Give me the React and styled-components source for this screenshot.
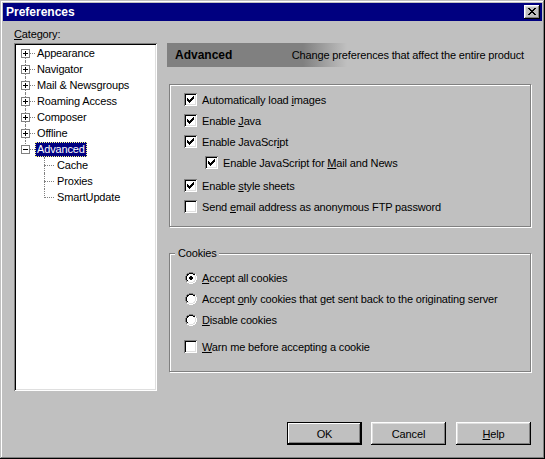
import React from 'react'
import styled, { createGlobalStyle } from 'styled-components'

const GlobalStyle = createGlobalStyle`
  html, body {
    margin: 0;
    padding: 0;
    background: #c0c0c0;
  }
  body {
    font-family: "Liberation Sans", Arial, sans-serif;
    font-size: 11px;
    letter-spacing: -0.15px;
    color: #000;
  }
`

// small pixel drawings (check mark, radio, tree boxes, close glyph)
const PALETTE = {
  K: '#000000',
  G: '#808080',
  W: '#ffffff',
  L: '#dfdfdf',
  w: '#ffffff',
}

const Pixels = ({ rows }) => (
  <svg width={rows[0].length} height={rows.length} shapeRendering="crispEdges" style={{ display: 'block' }}>
    {rows.flatMap((row, y) =>
      [...row].map((ch, x) =>
        PALETTE[ch] ? <rect key={x + '-' + y} x={x} y={y} width="1" height="1" fill={PALETTE[ch]} /> : null
      )
    )}
  </svg>
)

const CHECK = [
  '......K',
  '.....KK',
  'K...KKK',
  'KK.KKK.',
  'KKKKK..',
  '.KKK...',
  '..K....',
]

const CLOSE_X = [
  'KK....KK',
  '.KK..KK.',
  '..KKKK..',
  '...KK...',
  '..KKKK..',
  '.KK..KK.',
  'KK....KK',
]

const RADIO = [
  '....GGGG....',
  '..GGKKKKGG..',
  '.GKKwwwwKKW.',
  '.GKwwwwwwLW.',
  'GKwwwwwwwwLW',
  'GKwwwwwwwwLW',
  'GKwwwwwwwwLW',
  'GKwwwwwwwwLW',
  '.GKwwwwwwLW.',
  '.GLLwwwwLLW.',
  '..WWLLLLWW..',
  '....WWWW....',
]

const RADIO_ON = [
  '....GGGG....',
  '..GGKKKKGG..',
  '.GKKwwwwKKW.',
  '.GKwwwwwwLW.',
  'GKwwwKKwwwLW',
  'GKwwKKKKwwLW',
  'GKwwKKKKwwLW',
  'GKwwwKKwwwLW',
  '.GKwwwwwwLW.',
  '.GLLwwwwLLW.',
  '..WWLLLLWW..',
  '....WWWW....',
]

const PLUS = [
  'GGGGGGGGG',
  'GwwwwwwwG',
  'GwwwKwwwG',
  'GwwwKwwwG',
  'GwKKKKKwG',
  'GwwwKwwwG',
  'GwwwKwwwG',
  'GwwwwwwwG',
  'GGGGGGGGG',
]

const MINUS = [
  'GGGGGGGGG',
  'GwwwwwwwG',
  'GwwwwwwwG',
  'GwwwwwwwG',
  'GwKKKKKwG',
  'GwwwwwwwG',
  'GwwwwwwwG',
  'GwwwwwwwG',
  'GGGGGGGGG',
]

const Window = styled.div`
  width: 545px;
  height: 459px;
  box-sizing: border-box;
  padding: 3px;
  background: #c0c0c0;
  box-shadow: inset -1px -1px #000, inset 1px 1px #c0c0c0, inset -2px -2px #808080, inset 2px 2px #fff;
  display: flex;
  flex-direction: column;
`

const TitleBar = styled.div`
  height: 18px;
  flex: none;
  background: #000080;
  display: flex;
  align-items: center;
  justify-content: space-between;
  padding: 0 2px 0 3px;
`

const Title = styled.span`
  color: #fff;
  font-weight: bold;
  font-size: 12px;
  letter-spacing: 0;
`

const CloseButton = styled.span`
  width: 16px;
  height: 14px;
  box-sizing: border-box;
  padding: 3px 0 0 4px;
  background: #c0c0c0;
  box-shadow: inset -1px -1px #000, inset 1px 1px #fff, inset -2px -2px #808080, inset 2px 2px #dfdfdf;
`

const Body = styled.div`
  flex: 1;
  display: flex;
  flex-direction: column;
  padding: 7px 11px 0 11px;
`

const Main = styled.div`
  display: grid;
  grid-template-columns: 143px 364px;
  column-gap: 10px;
`

const Caption = styled.div`
  grid-column: 1;
  line-height: 13px;
  height: 13px;
  margin-bottom: 2px;
`

const Tree = styled.div`
  grid-column: 1;
  grid-row: 2;
  height: 348px;
  box-sizing: border-box;
  padding: 2px;
  background: #fff;
  box-shadow: inset 1px 1px #808080, inset -1px -1px #fff, inset 2px 2px #000, inset -2px -2px #dfdfdf;
`

const TreeRow = styled.div`
  height: 16px;
  display: flex;
  align-items: center;
`

const Gutter = styled.span`
  position: relative;
  flex: none;
  align-self: stretch;
  width: ${p => (p.$level ? 39 : 19)}px;
  box-sizing: border-box;
  padding: 4px 0 0 5px;

  &::before {
    content: '';
    position: absolute;
    left: ${p => p.$x}px;
    top: ${p => (p.$line === 'down' ? 8 : 0)}px;
    bottom: ${p => (p.$line === 'up' ? 7 : 0)}px;
    border-left: 1px dotted #808080;
  }

  &::after {
    content: '';
    position: absolute;
    top: 8px;
    left: ${p => p.$x}px;
    width: 10px;
    border-top: 1px dotted #808080;
  }
`

const Expander = styled.span`
  position: relative;
  z-index: 1;
  display: block;
  width: 9px;
  height: 9px;
`

const TreeLabel = styled.span`
  line-height: 13px;
  padding: 0 1px;
  border: 1px ${p => (p.$selected ? 'dotted #ffff80' : 'solid transparent')};
  background: ${p => (p.$selected ? '#000080' : 'transparent')};
  color: ${p => (p.$selected ? '#fff' : '#000')};
  white-space: nowrap;
`

const Panel = styled.div`
  grid-column: 2;
  grid-row: 2;
  display: flex;
  flex-direction: column;
`

const Banner = styled.div`
  height: 24px;
  display: flex;
  align-items: center;
  justify-content: space-between;
  padding: 0 7px 0 8px;
  background: linear-gradient(to right, #808080 136px, #c0c0c0 180px);
`

const BannerTitle = styled.span`
  font-weight: bold;
  font-size: 12px;
  letter-spacing: 0;
`

const Group = styled.div`
  margin: ${p => p.$top}px 0 0 2px;
  border: 1px solid #808080;
  box-shadow: inset 1px 1px #fff, 1px 1px #fff;
  display: flex;
  flex-direction: column;
  padding: ${p => p.$pad};
`

const Legend = styled.span`
  align-self: flex-start;
  margin: -7px 0 7px 5px;
  padding: 0 2px 0 3px;
  line-height: 13px;
  background: #c0c0c0;
`

const OptionRow = styled.div`
  height: 21px;
  display: flex;
  align-items: center;
  gap: 5px;
  padding-left: ${p => (p.$indent ? 35 : p.$radio ? 15 : 14)}px;
  margin-top: ${p => p.$gap || 0}px;
  white-space: nowrap;
`

const Box = styled.span`
  width: 13px;
  height: 13px;
  flex: none;
  box-sizing: border-box;
  padding: 3px;
  background: #fff;
  box-shadow: inset 1px 1px #808080, inset -1px -1px #fff, inset 2px 2px #000, inset -2px -2px #dfdfdf;
`

const Footer = styled.div`
  display: flex;
  justify-content: flex-end;
  gap: 9px;
  margin-top: 31px;
`

const Button = styled.button`
  width: 75px;
  height: 23px;
  border: none;
  padding: 0;
  margin-left: ${p => p.$shift || 0}px;
  background: #c0c0c0;
  font: 11px "Liberation Sans", Arial, sans-serif;
  letter-spacing: -0.15px;
  color: #000;
  box-shadow: ${p =>
    p.$default
      ? 'inset 0 0 0 1px #000, inset -2px -2px #000, inset 2px 2px #fff, inset -3px -3px #808080'
      : 'inset -1px -1px #000, inset 1px 1px #fff, inset -2px -2px #808080, inset 2px 2px #dfdfdf'};
`

const Check = ({ on, indent, gap, children }) => (
  <OptionRow $indent={indent} $gap={gap}>
    <Box>{on && <Pixels rows={CHECK} />}</Box>
    <span>{children}</span>
  </OptionRow>
)

const Radio = ({ on, children }) => (
  <OptionRow $radio>
    <Pixels rows={on ? RADIO_ON : RADIO} />
    <span>{children}</span>
  </OptionRow>
)

const treeItems = [
  { label: 'Appearance', level: 0, box: 'plus', line: 'down' },
  { label: 'Navigator', level: 0, box: 'plus', line: 'full' },
  { label: 'Mail & Newsgroups', level: 0, box: 'plus', line: 'full' },
  { label: 'Roaming Access', level: 0, box: 'plus', line: 'full' },
  { label: 'Composer', level: 0, box: 'plus', line: 'full' },
  { label: 'Offline', level: 0, box: 'plus', line: 'full' },
  { label: 'Advanced', level: 0, box: 'minus', line: 'up', selected: true },
  { label: 'Cache', level: 1, line: 'full' },
  { label: 'Proxies', level: 1, line: 'full' },
  { label: 'SmartUpdate', level: 1, line: 'up' },
]

export default function App() {
  return (
    <>
      <GlobalStyle />
      <Window>
        <TitleBar>
          <Title>Preferences</Title>
          <CloseButton>
            <Pixels rows={CLOSE_X} />
          </CloseButton>
        </TitleBar>
        <Body>
          <Main>
            <Caption>
              <u>C</u>ategory:
            </Caption>
            <Tree>
              {treeItems.map(item => (
                <TreeRow key={item.label}>
                  <Gutter $level={item.level} $x={item.level ? 28 : 9} $line={item.line}>
                    {item.box && (
                      <Expander>
                        <Pixels rows={item.box === 'plus' ? PLUS : MINUS} />
                      </Expander>
                    )}
                  </Gutter>
                  <TreeLabel $selected={item.selected}>{item.label}</TreeLabel>
                </TreeRow>
              ))}
            </Tree>
            <Panel>
              <Banner>
                <BannerTitle>Advanced</BannerTitle>
                <span>Change preferences that affect the entire product</span>
              </Banner>
              <Group $top={17} $pad="4px 0 9px">
                <Check on>
                  Automatically load <u>i</u>mages
                </Check>
                <Check on>
                  Enable <u>J</u>ava
                </Check>
                <Check on>
                  Enable JavaScr<u>i</u>pt
                </Check>
                <Check on indent>
                  Enable JavaScript for <u>M</u>ail and News
                </Check>
                <Check on gap={2}>
                  Enable <u>s</u>tyle sheets
                </Check>
                <Check>
                  Send <u>e</u>mail address as anonymous FTP password
                </Check>
              </Group>
              <Group $top={26} $pad="0 0 14px">
                <Legend>Cookies</Legend>
                <Radio on>
                  <u>A</u>ccept all cookies
                </Radio>
                <Radio>
                  Accept <u>o</u>nly cookies that get sent back to the originating server
                </Radio>
                <Radio>
                  <u>D</u>isable cookies
                </Radio>
                <Check gap={6}>
                  <u>W</u>arn me before accepting a cookie
                </Check>
              </Group>
            </Panel>
          </Main>
          <Footer>
            <Button $default>OK</Button>
            <Button>Cancel</Button>
            <Button $shift={1}>
              <u>H</u>elp
            </Button>
          </Footer>
        </Body>
      </Window>
    </>
  )
}
